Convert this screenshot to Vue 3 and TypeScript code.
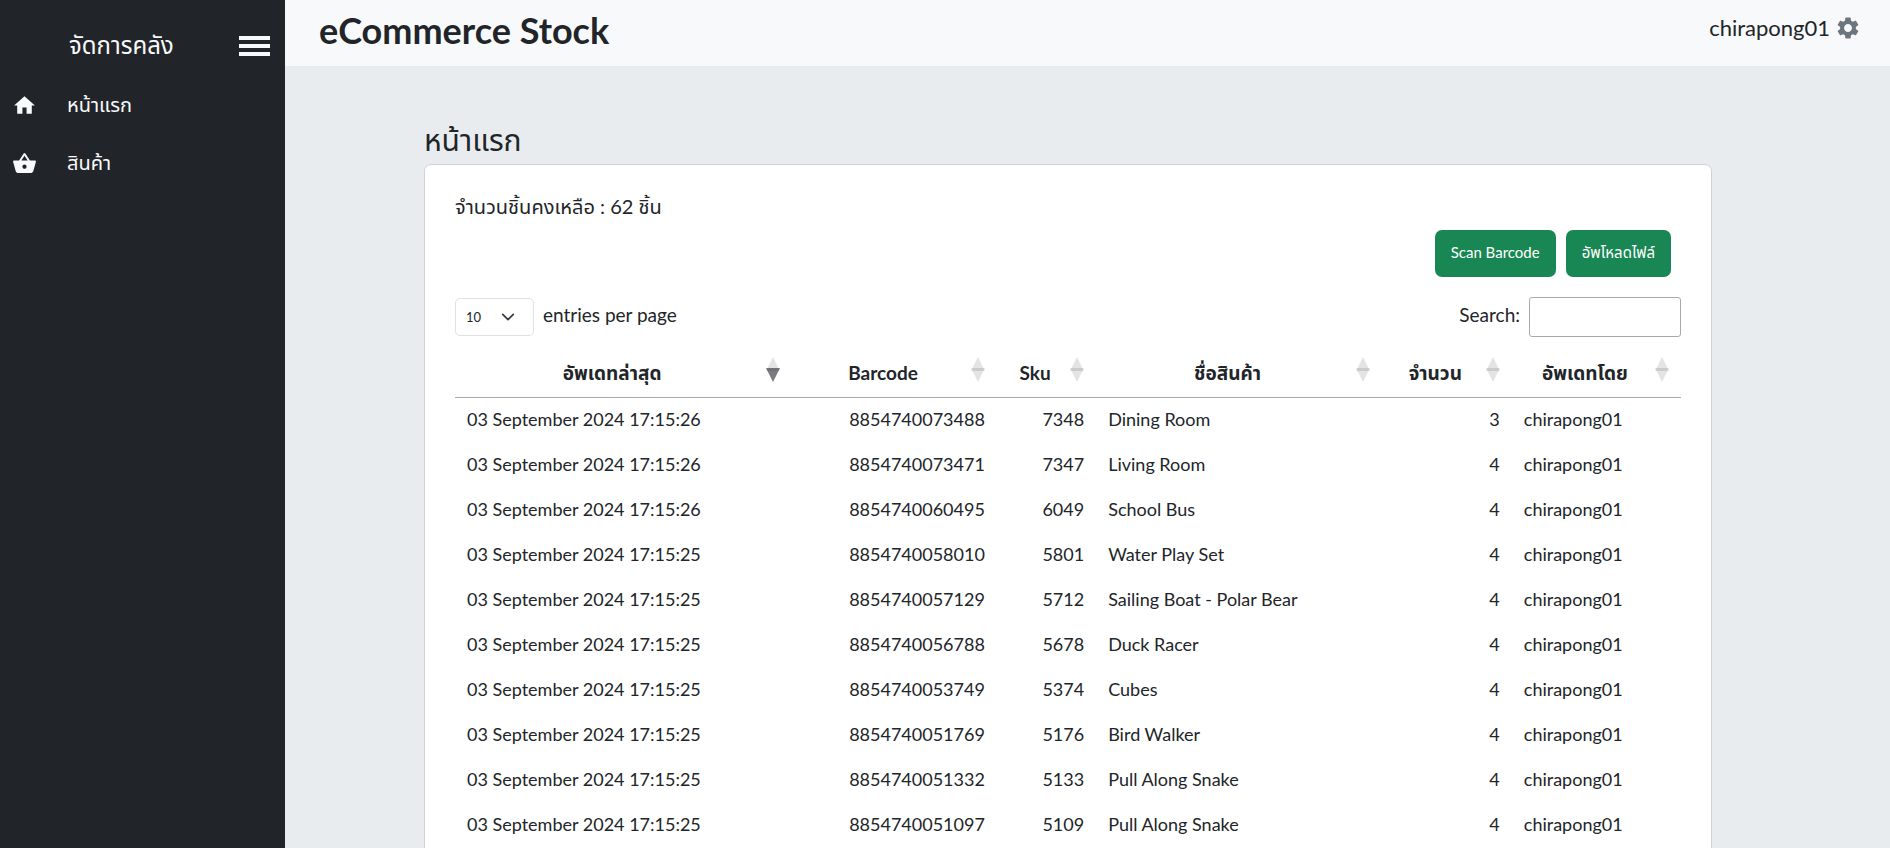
<script setup lang="ts">
import { computed, ref } from 'vue'

type Key = 'updated' | 'barcode' | 'sku' | 'name' | 'qty' | 'user'

interface Item {
  updated: string
  barcode: string
  sku: string
  name: string
  qty: number
  user: string
}

const columns: { key: Key; label: string; align: string }[] = [
  { key: 'updated', label: 'อัพเดทล่าสุด', align: 'start' },
  { key: 'barcode', label: 'Barcode', align: 'end' },
  { key: 'sku', label: 'Sku', align: 'end' },
  { key: 'name', label: 'ชื่อสินค้า', align: 'start' },
  { key: 'qty', label: 'จำนวน', align: 'end' },
  { key: 'user', label: 'อัพเดทโดย', align: 'start' },
]

const item = (time: string, barcode: string, sku: string, name: string, qty = 4): Item => ({
  updated: `03 September 2024 ${time}`,
  barcode,
  sku,
  name,
  qty,
  user: 'chirapong01',
})

const items: Item[] = [
  item('17:15:26', '8854740073488', '7348', 'Dining Room', 3),
  item('17:15:26', '8854740073471', '7347', 'Living Room'),
  item('17:15:26', '8854740060495', '6049', 'School Bus'),
  item('17:15:25', '8854740058010', '5801', 'Water Play Set'),
  item('17:15:25', '8854740057129', '5712', 'Sailing Boat - Polar Bear'),
  item('17:15:25', '8854740056788', '5678', 'Duck Racer'),
  item('17:15:25', '8854740053749', '5374', 'Cubes'),
  item('17:15:25', '8854740051769', '5176', 'Bird Walker'),
  item('17:15:25', '8854740051332', '5133', 'Pull Along Snake'),
  item('17:15:25', '8854740051097', '5109', 'Pull Along Snake'),
]

const search = ref('')
const perPage = ref(10)
const sortKey = ref<Key>('updated')
const descending = ref(true)

function sortBy(key: Key) {
  descending.value = sortKey.value === key ? !descending.value : false
  sortKey.value = key
}

const rows = computed(() => {
  const term = search.value.toLowerCase()
  const dir = descending.value ? -1 : 1
  return items
    .filter((r) => Object.values(r).join(' ').toLowerCase().includes(term))
    .sort((a, b) => {
      const x = a[sortKey.value]
      const y = b[sortKey.value]
      return x === y ? 0 : x > y ? dir : -dir
    })
    .slice(0, perPage.value)
})
</script>

<template>
  <div class="app">
    <aside class="sidebar">
      <div class="brand">
        <span class="brand-name">จัดการคลัง</span>
        <button class="toggle" type="button" aria-label="Menu">
          <svg viewBox="0 0 31 20" width="31" height="20" fill="currentColor">
            <path d="M0 0h31v4H0zM0 8h31v4H0zM0 16h31v4H0z" />
          </svg>
        </button>
      </div>
      <nav>
        <a class="nav-link" href="#home">
          <svg viewBox="0 0 24 24" width="25" height="25" fill="currentColor">
            <path d="M10 20v-6h4v6h5v-8h3L12 3 2 12h3v8z" />
          </svg>
          <span>หน้าแรก</span>
        </a>
        <a class="nav-link" href="#products">
          <svg viewBox="0 0 24 24" width="25" height="25" fill="currentColor">
            <path
              d="M17.21 9l-4.38-6.56a.99.99 0 0 0-1.66.01L6.79 9H2c-.55 0-1 .45-1 1 0 .09.01.18.04.27l2.54 9.27c.23.84 1 1.46 1.92 1.46h13c.92 0 1.69-.62 1.93-1.46l2.54-9.27L23 10c0-.55-.45-1-1-1h-4.79zM9 9l3-4.4L15 9H9zm3 8c-1.1 0-2-.9-2-2s.9-2 2-2 2 .9 2 2-.9 2-2 2z"
            />
          </svg>
          <span>สินค้า</span>
        </a>
      </nav>
    </aside>

    <div class="content">
      <header class="topbar">
        <h1>eCommerce Stock</h1>
        <div class="account">
          <span>chirapong01</span>
          <button class="gear" type="button" aria-label="Settings">
            <svg viewBox="2 2 20 20" width="22" height="22" fill="currentColor">
              <path
                d="M19.14 12.94c.04-.3.06-.61.06-.94 0-.32-.02-.64-.07-.94l2.03-1.58a.49.49 0 0 0 .12-.61l-1.92-3.32a.488.488 0 0 0-.59-.22l-2.39.96c-.5-.38-1.03-.7-1.62-.94l-.36-2.54a.484.484 0 0 0-.48-.41h-3.84c-.24 0-.43.17-.47.41l-.36 2.54c-.59.24-1.13.57-1.62.94l-2.39-.96c-.22-.08-.47 0-.59.22L2.74 8.87c-.12.21-.08.47.12.61l2.03 1.58c-.05.3-.09.63-.09.94s.02.64.07.94l-2.03 1.58a.49.49 0 0 0-.12.61l1.92 3.32c.12.22.37.29.59.22l2.39-.96c.5.38 1.03.7 1.62.94l.36 2.54c.05.24.24.41.48.41h3.84c.24 0 .44-.17.47-.41l.36-2.54c.59-.24 1.13-.56 1.62-.94l2.39.96c.22.08.47 0 .59-.22l1.92-3.32c.12-.22.07-.47-.12-.61l-2.01-1.58zM12 15.6c-1.98 0-3.6-1.62-3.6-3.6s1.62-3.6 3.6-3.6 3.6 1.62 3.6 3.6-1.62 3.6-3.6 3.6z"
              />
            </svg>
          </button>
        </div>
      </header>

      <main>
        <h2>หน้าแรก</h2>
        <section class="card">
          <p class="total">จำนวนชิ้นคงเหลือ : 62 ชิ้น</p>
          <div class="actions">
            <button class="btn" type="button">Scan Barcode</button>
            <button class="btn" type="button">อัพโหลดไฟล์</button>
          </div>
          <div class="controls">
            <div class="control">
              <select id="per-page" v-model="perPage">
                <option :value="10">10</option>
                <option :value="25">25</option>
                <option :value="50">50</option>
                <option :value="100">100</option>
              </select>
              <label for="per-page">entries per page</label>
            </div>
            <div class="control">
              <label for="search">Search:</label>
              <input id="search" v-model="search" type="search" />
            </div>
          </div>
          <table>
            <colgroup>
              <col v-for="c in columns" :key="c.key" :class="`col-${c.key}`" />
            </colgroup>
            <thead>
              <tr>
                <th v-for="c in columns" :key="c.key" scope="col">
                  <button class="sort" type="button" @click="sortBy(c.key)">
                    <span class="sort-label">{{ c.label }}</span>
                    <svg class="arrows" viewBox="0 0 14 25" width="14" height="25">
                      <path
                        d="M0 14 7 0l7 14z"
                        :class="{ on: sortKey === c.key && !descending }"
                      />
                      <path
                        d="M0 11h14L7 25z"
                        :class="{ on: sortKey === c.key && descending }"
                      />
                    </svg>
                  </button>
                </th>
              </tr>
            </thead>
            <tbody>
              <tr v-for="row in rows" :key="row.barcode">
                <td v-for="c in columns" :key="c.key" :class="c.align">{{ row[c.key] }}</td>
              </tr>
            </tbody>
          </table>
        </section>
      </main>
    </div>
  </div>
</template>

<style>
body {
  margin: 0;
}
</style>

<style scoped>
* {
  box-sizing: border-box;
}

.app {
  display: flex;
  height: 100vh;
  font-family: Lato, 'Noto Sans Thai', 'Noto Sans', sans-serif;
  font-size: 18px;
  line-height: 27px;
  color: #212529;
  background: #e9ecef;
}

button,
input,
select {
  font: inherit;
  color: inherit;
}

.sidebar {
  flex: 0 0 285px;
  background: #212529;
  color: #f8f9fa;
}

.brand {
  display: flex;
  align-items: center;
  justify-content: space-between;
  height: 76px;
  padding: 15px 15px 0 69px;
}

.brand-name {
  padding-bottom: 3px;
  font-size: 24px;
}

.toggle,
.gear {
  display: flex;
  padding: 0;
  border: 0;
  background: none;
}

.nav-link {
  display: flex;
  align-items: center;
  gap: 30px;
  height: 58px;
  padding-left: 12px;
  color: inherit;
  font-size: 20px;
  text-decoration: none;
}

.nav-link span {
  padding-bottom: 2px;
}

.content {
  display: flex;
  flex: 1;
  flex-direction: column;
  min-width: 0;
}

.topbar {
  display: flex;
  flex: 0 0 66px;
  align-items: flex-start;
  justify-content: space-between;
  padding: 9px 31px 0 34px;
  background: #f8f9fa;
}

h1 {
  margin: 0;
  font-size: 36px;
  font-weight: 700;
  line-height: 43px;
}

.account {
  display: flex;
  align-items: center;
  gap: 7px;
  padding-top: 5px;
  font-size: 22px;
}

.gear {
  color: #6c757d;
}

main {
  flex: 1;
  min-height: 0;
  padding: 52px 178px 0 139px;
  overflow: auto;
  scrollbar-width: none;
}

h2 {
  margin: 0 0 4px;
  font-size: 30px;
  font-weight: 400;
  line-height: 42px;
}

.card {
  padding: 28px 30px 30px;
  border: 1px solid #d0d3d6;
  border-radius: 7px;
  background: #fff;
}

.total {
  margin: 0;
  font-size: 20px;
}

.actions {
  display: flex;
  justify-content: flex-end;
  gap: 10px;
  padding: 10px 10px 20px 0;
}

.btn {
  height: 47px;
  padding: 0 16px 2px;
  border: 0;
  border-radius: 7px;
  background: #198754;
  color: #fff;
  font-size: 15px;
}

.controls {
  display: flex;
  align-items: center;
  justify-content: space-between;
  height: 40px;
}

.control {
  display: flex;
  align-items: center;
  gap: 9px;
}

label {
  padding-bottom: 5px;
  font-size: 19px;
}

select {
  width: 79px;
  height: 38px;
  padding: 0 10px;
  border: 1px solid #dee2e6;
  border-radius: 5px;
  appearance: none;
  background: #fff
    url("data:image/svg+xml,%3Csvg xmlns='http://www.w3.org/2000/svg' viewBox='0 0 16 16'%3E%3Cpath fill='none' stroke='%23343a40' stroke-linecap='round' stroke-linejoin='round' stroke-width='2' d='m2 5 6 6 6-6'/%3E%3C/svg%3E")
    no-repeat right 18px center / 14px;
  font-size: 13px;
}

input {
  width: 152px;
  height: 40px;
  padding: 5px;
  border: 1px solid #aaa;
  border-radius: 3px;
  background: transparent;
}

table {
  width: 100%;
  margin-top: 15px;
  border-collapse: separate;
  border-spacing: 0;
  table-layout: fixed;
}

.col-updated {
  width: 27.5%;
}

.col-barcode {
  width: 16.7%;
}

.col-sku {
  width: 8.1%;
}

.col-name {
  width: 23.3%;
}

.col-qty {
  width: 10.6%;
}

.col-user {
  width: 13.8%;
}

th {
  padding: 0;
  border-bottom: 1px solid #aaa;
}

.sort {
  display: flex;
  align-items: center;
  width: 100%;
  height: 45px;
  padding: 0 12px 5px;
  border: 0;
  background: none;
  font-size: 19px;
  font-weight: 700;
}

.sort-label {
  flex: 1;
  margin-right: 9px;
  text-align: center;
}

.arrows {
  margin-bottom: 5px;
  fill: #212529;
}

.arrows path {
  opacity: 0.125;
}

.arrows .on {
  opacity: 0.6;
}

td {
  padding: 8px 12px 10px;
  white-space: nowrap;
}

.start {
  text-align: left;
}

.end {
  text-align: right;
}
</style>
